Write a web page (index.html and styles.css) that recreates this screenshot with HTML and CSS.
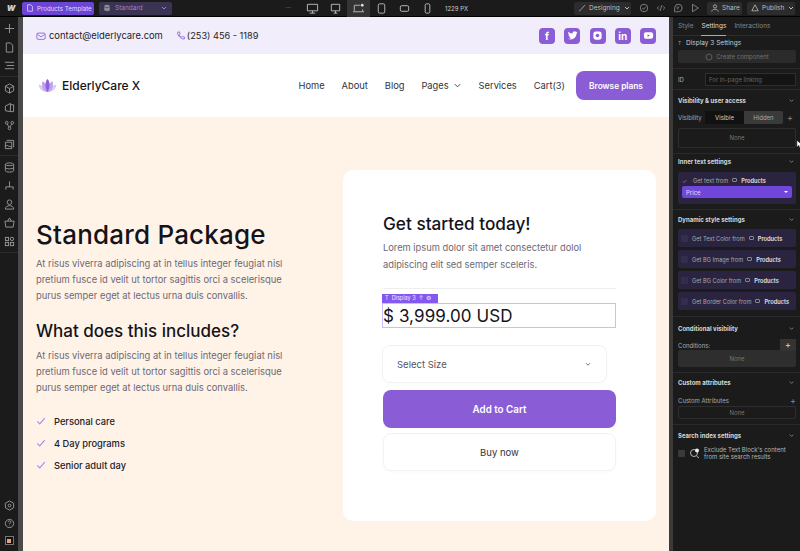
FILE: index.html
```html
<!DOCTYPE html>
<html lang="en">

<head>
    <meta charset="UTF-8">
    <title>Products Template</title>
    <link rel="stylesheet" href="styles.css">
</head>

<body>

    <!-- editor top bar -->
    <header class="topbar">
        <div class="top-left">
            <span class="wf-logo">W</span>
            <span class="tpl-pill">
                <svg class="ic10" viewBox="0 0 10 10"><path d="M2 1h4l2 2v6H2z" /></svg>
                Products Template
            </span>
            <span class="std-pill">
                <svg class="ic10" viewBox="0 0 10 10"><ellipse cx="5" cy="2.5" rx="3.5" ry="1.5" class="solid" /><path d="M1.5 3.5v4c0 2 7 2 7 0v-4c0 1.500-7 1.500-7 0z" class="solid" /></svg>
                Standard
                <svg class="chev-sm" viewBox="0 0 8 8"><path d="M2 3l2 2 2-2" /></svg>
            </span>
        </div>
        <div class="top-mid">
            <span class="dots">···</span>
            <span class="bp"><svg viewBox="0 0 14 14"><path d="M1.5 2.5h11v7h-11zM4 12h6M7 9.5V12" /></svg></span>
            <span class="bp"><svg viewBox="0 0 14 14"><path d="M2.5 2.5h9v7h-9zM5 12h4M7 9.5V12" /></svg></span>
            <span class="bp on"><svg viewBox="0 0 14 14"><path d="M2.5 9.5v-6h6M1 10.5h12M11.5 8v2" /><circle cx="11" cy="3.5" r="1.5" class="dot" /></svg></span>
            <span class="bp"><svg viewBox="0 0 14 14"><rect x="3.5" y="2" width="7" height="10" rx="1.5" /></svg></span>
            <span class="bp"><svg viewBox="0 0 14 14"><rect x="2.5" y="4" width="9" height="6" rx="1.5" /></svg></span>
            <span class="bp"><svg viewBox="0 0 14 14"><rect x="4.5" y="2" width="5" height="10" rx="1.5" /></svg></span>
            <span class="px">1229 PX</span>
        </div>
        <div class="top-right">
            <span class="dark-btn btn-designing">
                <svg class="ic10" viewBox="0 0 10 10"><path d="M1.5 8.5c2 0 2-2 3-2.500L8.500 1.500" /></svg>
                Designing
                <svg class="chev-sm" viewBox="0 0 8 8"><path d="M2 3l2 2 2-2" /></svg>
            </span>
            <div class="tools">
                <span class="tool"><svg viewBox="0 0 12 12"><circle cx="6" cy="6" r="4.5" /><path d="M4 6l1.5 1.5L8 4.5" /></svg></span>
                <span class="tool"><svg viewBox="0 0 12 12"><path d="M3.5 4L1.5 6l2 2M8.5 4l2 2-2 2M7 2.500L5 9.500" /></svg></span>
                <span class="tool"><svg viewBox="0 0 12 12"><path d="M2 11V6a4.5 4.5 0 1 1 4.500 4.500H3M4.500 5h3M4.500 7h2" /></svg></span>
                <span class="tool"><svg viewBox="0 0 12 12"><path d="M3 1.5l7 4.500-7 4.500z" /></svg></span>
            </div>
            <span class="dark-btn btn-share">
                <svg class="ic10" viewBox="0 0 10 10"><circle cx="5" cy="3" r="2" /><path d="M1 9.5c0-4 8-4 8 0" /></svg>
                Share
            </span>
            <span class="dark-btn btn-publish">
                <svg class="ic10" viewBox="0 0 10 10"><path d="M5 1l4 7.500H1z" /></svg>
                Publish
                <svg class="chev-sm" viewBox="0 0 8 8"><path d="M2 3l2 2 2-2" /></svg>
            </span>
        </div>
    </header>

    <div class="workspace">

        <!-- left rail -->
        <aside class="rail">
            <div class="rail-group">
                <svg viewBox="0 0 12 12"><path d="M6 1v10M1 6h10" /></svg>
                <svg viewBox="0 0 12 12"><path d="M2.5 1h4.500l2.500 2.500V11h-7z" /></svg>
                <svg viewBox="0 0 12 12"><path d="M1 2.5h10M3 6h8M1 9.500h10" /></svg>
            </div>
            <div class="rail-group">
                <svg viewBox="0 0 12 12"><path d="M6 1l4.500 2.500v5L6 11 1.500 8.500v-5zM1.500 3.500L6 6l4.500-2.500M6 6v5" /></svg>
                <svg viewBox="0 0 12 12"><path d="M1.5 4.500L7 1.500v9l-5.500-1zM7 3h3.500v7.500H7" /></svg>
                <svg viewBox="0 0 12 12"><circle cx="3" cy="3" r="1.5" /><circle cx="9" cy="3" r="1.5" /><circle cx="6" cy="9" r="1.5" /><path d="M3.5 4.500L5.500 7.500M8.500 4.500L6.500 7.500" /></svg>
                <svg viewBox="0 0 12 12"><path d="M3 1.5h7.500V9M1.500 3.500h7v7h-7zM1.500 8.500l2-2 2 2 1-1 2 2" /></svg>
            </div>
            <div class="rail-group">
                <svg viewBox="0 0 12 12"><ellipse cx="6" cy="2.5" rx="4.5" ry="1.5" /><path d="M1.5 2.500v7c0 2 9 2 9 0v-7M1.500 6c0 2 9 2 9 0" /></svg>
                <svg viewBox="0 0 12 12"><path d="M6 1.5v3M2 10.500V7.500h8v3M6 4.500v3" /></svg>
                <svg viewBox="0 0 12 12"><circle cx="6" cy="3.5" r="2.5" /><path d="M1.5 11c0-5 9-5 9 0z" /></svg>
                <svg viewBox="0 0 12 12"><path d="M1 4.5h10l-1 6.500H2zM4 4.500L6 1l2 3.500" /></svg>
                <svg viewBox="0 0 12 12"><rect x="1.5" y="1.5" width="3.5" height="3.5" /><rect x="1.5" y="7" width="3.5" height="3.5" /><rect x="7" y="7" width="3.5" height="3.5" /><circle cx="8.7" cy="3.2" r="1.8" /></svg>
            </div>
            <div class="rail-bottom">
                <svg viewBox="0 0 12 12"><path d="M6 1l4.500 2.500v5L6 11 1.500 8.500v-5z" /><circle cx="6" cy="6" r="1.5" /></svg>
                <svg viewBox="0 0 12 12"><circle cx="6" cy="6" r="4.5" /><path d="M4.5 4.500c0-2 3-2 3 0 0 1-1.500 1-1.500 2.500M6 8.500v.5" /></svg>
                <span class="stop-ic"><i></i></span>
            </div>
        </aside>

        <!-- site preview -->
        <main class="canvas">
            <div class="contact-strip">
                <div class="contact-info">
                    <span class="contact-item">
                        <svg viewBox="0 0 12 12"><rect x="1" y="2.5" width="10" height="7.5" rx="1.5" /><path d="M1.5 4l4.500 3 4.500-3" /></svg>
                        contact@elderlycare.com
                    </span>
                    <span class="contact-item">
                        <svg viewBox="0 0 12 12"><path d="M2 1.5l2-.5 1 2.500-1 1c.5 1.500 1.500 2.500 3 3l1-1 2.500 1-.5 2c-4 .5-8.500-4-8-8z" /></svg>
                        (253) 456 - 1189
                    </span>
                </div>
                <div class="socials">
                    <span class="social">f</span>
                    <span class="social"><svg viewBox="0 0 12 12"><path d="M1 9.5c4 2 9 0 9.500-6l1-1.500-1.500.3c-1-1.500-4-1-4 1.500C4 4 2.500 3 1.500 2c-.5 1.500 0 2.500 1 3.500L1.500 5.200C1.700 6.500 2.500 7 3.500 7.500L2.500 7.600c.3.800 1 1.200 2 1.300-1 .6-2 .8-3.500.6z" /></svg></span>
                    <span class="social"><svg viewBox="0 0 12 12"><rect x="1.5" y="1.5" width="9" height="9" rx="2.5" /><circle cx="6" cy="6" r="2" class="cut" /></svg></span>
                    <span class="social">in</span>
                    <span class="social"><svg viewBox="0 0 12 12"><rect x="1" y="2.5" width="10" height="7" rx="2" /><path d="M5 4.5L7.500 6 5 7.500z" class="cut" /></svg></span>
                </div>
            </div>

            <nav class="site-nav">
                <div class="brand">
                    <svg class="lotus" viewBox="0 0 20 16">
                        <path d="M.5 7C4 7.500 8 11 10 15 4 15.500 1 11 .5 7zM19.500 7C16 7.500 12 11 10 15c6 .5 9-4 9.500-8z" fill="#d9c9f3" />
                        <path d="M4.5 3.500C9 5 10 11 10 15 5 14 3.500 9 4.500 3.500zM15.500 3.500C11 5 10 11 10 15c5-1 6.500-6 5.500-11.500z" fill="#bda2ea" />
                        <path d="M10 1c2.500 2.500 3.200 8 0 14-3.200-6-2.500-11.500 0-14z" fill="#8e5fd8" />
                    </svg>
                    ElderlyCare X
                </div>
                <div class="nav-links">
                    <a>Home</a>
                    <a>About</a>
                    <a>Blog</a>
                    <a class="has-caret">Pages <svg viewBox="0 0 10 10"><path d="M2 3.5l3 3 3-3" /></svg></a>
                    <a>Services</a>
                    <a>Cart(3)</a>
                </div>
                <a class="browse-btn">Browse plans</a>
            </nav>

            <section class="hero">
                <div class="hero-copy">
                    <h1>Standard Package</h1>
                    <p>At risus viverra adipiscing at in tellus integer feugiat nisl pretium fusce id velit ut tortor sagittis orci a scelerisque purus semper eget at lectus urna duis convallis.</p>
                    <h2>What does this includes?</h2>
                    <p>At risus viverra adipiscing at in tellus integer feugiat nisl pretium fusce id velit ut tortor sagittis orci a scelerisque purus semper eget at lectus urna duis convallis.</p>
                    <ul class="checks">
                        <li><svg viewBox="0 0 12 12"><path d="M1.5 6.500l3 3 6-7" /></svg>Personal care</li>
                        <li><svg viewBox="0 0 12 12"><path d="M1.5 6.500l3 3 6-7" /></svg>4 Day programs</li>
                        <li><svg viewBox="0 0 12 12"><path d="M1.5 6.500l3 3 6-7" /></svg>Senior adult day</li>
                    </ul>
                </div>

                <div class="buy-card">
                    <h3>Get started today!</h3>
                    <p>Lorem ipsum dolor sit amet consectetur dolol adipiscing elit sed semper sceleris.</p>
                    <hr>
                    <div class="price">
                        <span class="sel-tag">T&nbsp; Display 3 &nbsp;↑ &nbsp;⚙</span>
                        $ 3,999.00 USD
                    </div>
                    <div class="size-select">
                        Select Size
                        <svg viewBox="0 0 10 10"><path d="M2.5 4l2.500 2.500L7.500 4" /></svg>
                    </div>
                    <a class="cart-btn">Add to Cart</a>
                    <a class="buynow-btn">Buy now</a>
                </div>
            </section>
        </main>

        <!-- settings panel -->
        <aside class="panel">
            <div class="tabs">
                <span>Style</span>
                <span class="active">Settings</span>
                <span>Interactions</span>
            </div>
            <div class="block block-title">
                <div class="el-title"><small>T</small> Display 3 Settings</div>
                <div class="comp-btn">
                    <svg class="ic10" viewBox="0 0 10 10"><path d="M5 1l3.500 2v4L5 9 1.500 7V3z" /></svg>
                    Create component
                </div>
            </div>
            <div class="block id-row">
                <label>ID</label>
                <span class="id-input">For in-page linking</span>
            </div>
            <div class="block block-vis">
                <div class="sec-head">Visibility &amp; user access <svg viewBox="0 0 8 8"><path d="M2 3l2 2 2-2" /></svg></div>
                <div class="vis-row">
                    <label>Visibility</label>
                    <div class="seg"><span class="on">Visible</span><span>Hidden</span></div>
                    <b>+</b>
                </div>
                <div class="none-box">None</div>
            </div>
            <div class="block block-inner">
                <div class="sec-head">Inner text settings <svg viewBox="0 0 8 8"><path d="M2 3l2 2 2-2" /></svg></div>
                <div class="purple-card">
                    <div class="get-line"><em class="tick">✓</em> Get text from <u></u> <strong>Products</strong></div>
                    <div class="price-select">Price <i></i></div>
                </div>
            </div>
            <div class="block block-dyn">
                <div class="sec-head">Dynamic style settings <svg viewBox="0 0 8 8"><path d="M2 3l2 2 2-2" /></svg></div>
                <div class="get-row"><em></em> Get Text Color from <u></u> <strong>Products</strong></div>
                <div class="get-row"><em></em> Get BG Image from <u></u> <strong>Products</strong></div>
                <div class="get-row"><em></em> Get BG Color from <u></u> <strong>Products</strong></div>
                <div class="get-row"><em></em> Get Border Color from <u></u> <strong>Products</strong></div>
            </div>
            <div class="block block-cond">
                <div class="sec-head">Conditional visibility <svg viewBox="0 0 8 8"><path d="M2 3l2 2 2-2" /></svg></div>
                <div class="cond-row">Conditions: <b>+</b></div>
                <div class="none-box filled">None</div>
            </div>
            <div class="block block-attr">
                <div class="sec-head">Custom attributes <svg viewBox="0 0 8 8"><path d="M2 3l2 2 2-2" /></svg></div>
                <div class="attr-row">Custom Attributes <b>+</b></div>
                <div class="none-box low">None</div>
            </div>
            <div class="block block-search">
                <div class="sec-head">Search index settings <svg viewBox="0 0 8 8"><path d="M2 3l2 2 2-2" /></svg></div>
                <div class="search-row">
                    <em></em>
                    <svg viewBox="0 0 12 12"><circle cx="5" cy="6" r="3.5" /><path d="M7.5 9l2.500 2" /><circle cx="8" cy="3.5" r="2" class="white" /></svg>
                    <span>Exclude Text Block's content from site search results</span>
                </div>
            </div>
        </aside>
    </div>

    <svg class="cursor" viewBox="0 0 8 12"><path d="M1 1v8l2-2 1.500 3 1.500-.7L4.500 6.500H7z" /></svg>

</body>

</html>
```

FILE: styles.css
```css
* {
    box-sizing: border-box;
}

html,
body {
    margin: 0;
    height: 551px;
    overflow: hidden;
}

body {
    position: relative;
    background-color: #1b1b1b;
    font-family: 'Inter', sans-serif;
    color: #121212;
    display: flex;
    flex-direction: column;
}

svg {
    fill: none;
    stroke: currentColor;
    stroke-width: 1;
}

.cursor {
    position: absolute;
    left: 796px;
    top: 139px;
    width: 7px;
    height: 11px;
    fill: #fff;
    stroke: #000;
    stroke-width: .5;
}

/* top bar */
.topbar {
    height: 17px;
    flex: none;
    display: flex;
    align-items: center;
    background-color: #1b1b1b;
    color: #bdbdbd;
    font-size: 6.5px;
    border-bottom: 1px solid #000;
}

.top-left {
    width: 274px;
    flex: none;
    display: flex;
    align-items: center;
}

.wf-logo {
    width: 22px;
    text-align: center;
    color: #d0d0d0;
    font-weight: 900;
    font-style: italic;
    font-size: 8px;
}

.ic10 {
    width: 8px;
    height: 8px;
    flex: none;
}

.tpl-pill {
    width: 72px;
    height: 13px;
    margin-right: 5px;
    background-color: #6c44d6;
    border-radius: 2px;
    color: #e4daff;
    font-size: 6.2px;
    display: flex;
    align-items: center;
    gap: 3px;
    padding-left: 4px;
    white-space: nowrap;
}

.std-pill {
    width: 73px;
    height: 13px;
    background-color: #3b3352;
    border-radius: 2px;
    color: #9a82d8;
    display: flex;
    align-items: center;
    gap: 4px;
    padding-left: 4px;
}

.std-pill .chev-sm {
    margin-left: auto;
    margin-right: 4px;
}

.solid {
    fill: #8a8a94;
    stroke: none;
}

.chev-sm {
    width: 8px;
    height: 8px;
    flex: none;
}

.top-mid {
    display: flex;
    align-items: center;
    height: 17px;
}

.dots {
    width: 24.5px;
    margin-left: 2px;
    color: #888;
    text-align: center;
}

.bp {
    width: 23px;
    height: 17px;
    display: flex;
    align-items: center;
    justify-content: center;
}

.bp svg {
    width: 13px;
    height: 13px;
}

.bp.on {
    background-color: #343434;
}

.bp .dot {
    fill: #ddd;
    stroke: none;
}

.px {
    margin-left: 6.5px;
    font-size: 6px;
    color: #c8c8c8;
}

.top-right {
    margin-left: auto;
    display: flex;
    align-items: center;
    padding-right: 5px;
}

.dark-btn {
    height: 13px;
    padding: 0 4px;
    background-color: #2c2c2c;
    border-radius: 2px;
    display: flex;
    align-items: center;
    gap: 3px;
    white-space: nowrap;
}

.btn-designing {
    width: 57px;
}

.btn-share {
    width: 35px;
    margin-right: 5px;
}

.btn-publish {
    width: 48px;
}

.tools {
    display: flex;
    margin: 0 4px 0 5px;
}

.tool {
    width: 16.75px;
    display: flex;
    justify-content: center;
    color: #8f8f8f;
}

.tool svg {
    width: 10px;
    height: 10px;
}

/* main split */
.workspace {
    flex: 1;
    min-height: 0;
    display: flex;
}

.rail {
    width: 18px;
    flex: none;
    background-color: #1b1b1b;
    color: #9a9a9a;
    display: flex;
    flex-direction: column;
    align-items: center;
    padding-bottom: 6px;
}

.rail svg {
    width: 11px;
    height: 11px;
}

.rail-group {
    width: 100%;
    display: flex;
    flex-direction: column;
    align-items: center;
    gap: 7.5px;
    padding: 6px 0 5px;
    border-bottom: 1px solid #2d2d2d;
}

.rail-bottom {
    margin-top: auto;
    display: flex;
    flex-direction: column;
    align-items: center;
    gap: 7px;
}

.stop-ic {
    width: 9px;
    height: 9px;
    background-color: #111;
    border: 1px solid #777;
    display: flex;
    align-items: center;
    justify-content: center;
}

.stop-ic i {
    width: 4px;
    height: 4px;
    background-color: #e0a583;
}

.canvas {
    width: 651px;
    flex: none;
    background-color: #fff;
    border-left: 5px solid #4a4a4a;
    display: flex;
    flex-direction: column;
    overflow: hidden;
}

/* site header */
.contact-strip {
    height: 37px;
    flex: none;
    background-color: #f1edfb;
    display: flex;
    align-items: center;
    justify-content: space-between;
    padding: 0 13px;
}

.contact-info {
    display: flex;
    gap: 13px;
}

.contact-item {
    display: flex;
    align-items: center;
    gap: 3px;
    font-size: 9.4px;
    color: #23222b;
}

.contact-item + .contact-item {
    gap: 1px;
    font-size: 9.2px;
}

.contact-item svg {
    width: 10px;
    height: 10px;
    color: #8a5cd6;
}

.socials {
    display: flex;
    gap: 9.25px;
}

.social {
    width: 16px;
    height: 16px;
    border-radius: 4px;
    background-color: #8a5cd6;
    color: #fff;
    font-size: 10px;
    font-weight: 700;
    display: flex;
    align-items: center;
    justify-content: center;
}

.social svg {
    width: 11px;
    height: 11px;
    fill: #fff;
    stroke: none;
}

.social .cut {
    fill: #8a5cd6;
}

.site-nav {
    height: 63px;
    flex: none;
    display: flex;
    align-items: center;
    padding: 0 13px 0 15px;
}

.brand {
    display: flex;
    align-items: center;
    gap: 5px;
    font-size: 12px;
    font-weight: 500;
    color: #14131a;
}

.lotus {
    width: 19px;
    height: 15px;
    stroke: none;
}

.nav-links {
    margin-left: auto;
    display: flex;
    align-items: center;
    gap: 17px;
    font-size: 9.3px;
    color: #33323c;
}

.has-caret {
    display: flex;
    align-items: center;
    gap: 4px;
}

.has-caret svg {
    width: 9px;
    height: 9px;
}

.browse-btn {
    width: 80px;
    height: 29px;
    margin-left: 11px;
    background-color: #8a5cd6;
    color: #fff;
    border-radius: 8px;
    font-size: 8.3px;
    font-weight: 600;
    display: flex;
    align-items: center;
    justify-content: center;
}

/* hero */
.hero {
    flex: 1;
    background-color: #fff3e8;
    padding: 53px 13px 0;
    display: flex;
    justify-content: space-between;
}

.hero-copy {
    width: 250px;
    padding-top: 49px;
}

h1 {
    margin: 0 0 5px;
    font-size: 26px;
    line-height: 32px;
    font-weight: 500;
    letter-spacing: .2px;
    color: #14131a;
}

h2 {
    margin: 15px 0 5px;
    font-size: 17px;
    line-height: 24px;
    font-weight: 500;
    color: #14131a;
}

.hero-copy p {
    margin: 0;
    font-size: 9.4px;
    line-height: 16px;
    color: #6b6975;
}

.checks {
    list-style: none;
    margin: 14px 0 0;
    padding: 0;
    font-size: 9.3px;
    font-weight: 500;
    color: #23222b;
}

.checks li {
    height: 22px;
    display: flex;
    align-items: center;
    gap: 8px;
}

.checks svg {
    width: 10px;
    height: 10px;
    color: #a98ae6;
    stroke-width: 1.3;
}

.buy-card {
    width: 313px;
    height: 351px;
    background-color: #fff;
    border-radius: 10px;
    padding: 43px 40px 0;
}

h3 {
    margin: 0 0 4px;
    font-size: 17.2px;
    line-height: 22px;
    font-weight: 500;
    color: #14131a;
}

.buy-card p {
    margin: 0;
    font-size: 9.3px;
    line-height: 17px;
    color: #6b6975;
}

.buy-card hr {
    border: none;
    border-top: 1px solid #eeeeee;
    margin: 15px 0 14px;
}

.price {
    position: relative;
    height: 25px;
    margin-left: -1px;
    border: 1px solid #cdbcfa;
    font-size: 17px;
    line-height: 24px;
    color: #14131a;
    letter-spacing: .1px;
}

.sel-tag {
    position: absolute;
    left: -1px;
    top: -10px;
    width: 56px;
    height: 9px;
    padding-left: 3px;
    background-color: #8458f0;
    color: #efe8ff;
    font-size: 5.5px;
    line-height: 9px;
    letter-spacing: 0;
    white-space: nowrap;
}

.size-select {
    width: 225px;
    height: 38px;
    margin: 17px 0 0 -1px;
    border: 1px solid #f4f2f0;
    border-radius: 8px;
    box-shadow: 0 2px 4px rgba(0, 0, 0, .02);
    padding: 0 14px;
    font-size: 9.5px;
    color: #55535e;
    display: flex;
    align-items: center;
    justify-content: space-between;
}

.size-select svg {
    width: 8px;
    height: 8px;
}

.cart-btn {
    height: 38px;
    margin-top: 7px;
    background-color: #8a5cd6;
    border-radius: 8px;
    color: #fff;
    font-size: 9.8px;
    font-weight: 600;
    display: flex;
    align-items: center;
    justify-content: center;
}

.buynow-btn {
    height: 38px;
    margin-top: 5px;
    border: 1px solid #f4f2f0;
    border-radius: 8px;
    box-shadow: 0 2px 4px rgba(0, 0, 0, .02);
    font-size: 9.5px;
    color: #33323c;
    display: flex;
    align-items: center;
    justify-content: center;
}

/* right panel */
.panel {
    flex: 1;
    min-width: 0;
    background-color: #1b1b1b;
    border-left: 4px solid #3a3a3a;
    color: #a9a9a9;
    font-size: 6px;
}

.tabs {
    height: 19px;
    display: flex;
    align-items: center;
    gap: 8px;
    padding-left: 5px;
    font-size: 6.5px;
    border-bottom: 1px solid #2d2d2d;
}

.tabs span {
    line-height: 18px;
    color: #888;
}

.tabs .active {
    color: #ddd;
    border-bottom: 1px solid #aaa;
}

.block {
    padding: 0 4px 5px 5px;
    border-bottom: 1px solid #2a2a2a;
}

.block-title {
    padding-top: 2px;
}

.block-vis {
    padding-top: 3px;
}

.block-dyn {
    padding-top: 2px;
    padding-bottom: 6px;
}

.block-cond {
    padding-top: 4px;
}

.block-attr {
    padding-top: 2px;
}

.block-search {
    padding-top: 3px;
    border-bottom: none;
}

.el-title {
    height: 10px;
    line-height: 10px;
    margin-bottom: 2px;
    color: #ccc;
    font-size: 6.5px;
}

.el-title small {
    font-size: 5px;
    color: #999;
    margin-right: 3px;
}

.comp-btn {
    height: 13px;
    background-color: #2b2b2b;
    border-radius: 2px;
    color: #707070;
    display: flex;
    align-items: center;
    justify-content: center;
    gap: 3px;
}

.id-row {
    height: 21px;
    padding-bottom: 0;
    display: flex;
    align-items: center;
}

.id-row label {
    width: 27px;
}

.id-input {
    flex: 1;
    height: 13px;
    line-height: 11px;
    padding-left: 3px;
    border: 1px solid #2e2e2e;
    background-color: #141414;
    color: #666;
}

.sec-head {
    height: 14px;
    color: #d8d8d8;
    font-weight: 700;
    display: flex;
    align-items: center;
    justify-content: space-between;
    padding-right: 1px;
}

.sec-head svg {
    width: 7px;
    height: 7px;
    color: #888;
}

.vis-row {
    display: flex;
    align-items: center;
    margin-top: 4px;
}

.vis-row label {
    width: 27px;
}

.vis-row b,
.cond-row b,
.attr-row b {
    font-weight: 400;
    font-size: 9px;
    color: #888;
}

.vis-row b {
    margin-left: 4px;
}

.seg {
    width: 78px;
    height: 13px;
    background-color: #3a3a3a;
    border-radius: 2px;
    display: flex;
}

.seg span {
    flex: 1;
    text-align: center;
    line-height: 13px;
}

.seg .on {
    background-color: #111;
    color: #d0d0d0;
}

.none-box {
    height: 20px;
    margin-top: 4px;
    border: 1px solid #2e2e2e;
    border-radius: 2px;
    color: #777;
    text-align: center;
    line-height: 18px;
}

.none-box.filled {
    height: 17px;
    margin-top: -1px;
    background-color: #2e2e2e;
    line-height: 15px;
}

.none-box.low {
    height: 13px;
    margin-top: -1px;
    line-height: 11px;
}

.purple-card {
    height: 32px;
    margin-top: 4px;
    background-color: #2b2440;
    border-radius: 2px;
    padding: 3px 4px;
}

.get-line {
    display: flex;
    align-items: center;
    gap: 3px;
    height: 10px;
    font-size: 5.7px;
    white-space: nowrap;
}

.tick {
    font-style: normal;
    color: #a584f0;
    width: 8px;
}

.get-line u,
.get-row u {
    width: 5px;
    height: 4px;
    border: 1px solid #888;
    border-radius: 1px;
    margin-left: 1px;
}

.get-line strong,
.get-row strong {
    color: #e2e2e2;
    font-weight: 600;
    margin-left: 1px;
}

.price-select {
    height: 12px;
    margin-top: 1px;
    background-color: #7047da;
    border-radius: 2px;
    color: #e4dcff;
    display: flex;
    align-items: center;
    justify-content: space-between;
    padding: 0 4px;
}

.price-select i {
    border-left: 2px solid transparent;
    border-right: 2px solid transparent;
    border-top: 2px solid #fff;
}

.get-row {
    height: 18px;
    margin-top: 3px;
    background-color: #2b2440;
    border-radius: 2px;
    padding-left: 3px;
    font-size: 5.7px;
    display: flex;
    align-items: center;
    gap: 3px;
    white-space: nowrap;
}

.get-row em,
.search-row em {
    width: 7px;
    height: 7px;
    background-color: #352d4c;
    border-radius: 1px;
    margin-right: 1px;
}

.cond-row,
.attr-row {
    display: flex;
    align-items: center;
    justify-content: space-between;
    margin-top: 4px;
}

.cond-row {
    height: 12px;
}

.attr-row {
    height: 14px;
}

.cond-row b {
    width: 16px;
    height: 12px;
    background-color: #333;
    color: #ddd;
    text-align: center;
    line-height: 12px;
}

.search-row {
    display: flex;
    align-items: center;
    gap: 3px;
    line-height: 7px;
    margin-top: 4px;
    color: #b5b5b5;
}

.search-row em {
    flex: none;
    background-color: #3a3a3a;
}

.search-row svg {
    width: 12px;
    height: 12px;
    flex: none;
}

.search-row .white {
    fill: #eee;
    stroke: none;
}
```
